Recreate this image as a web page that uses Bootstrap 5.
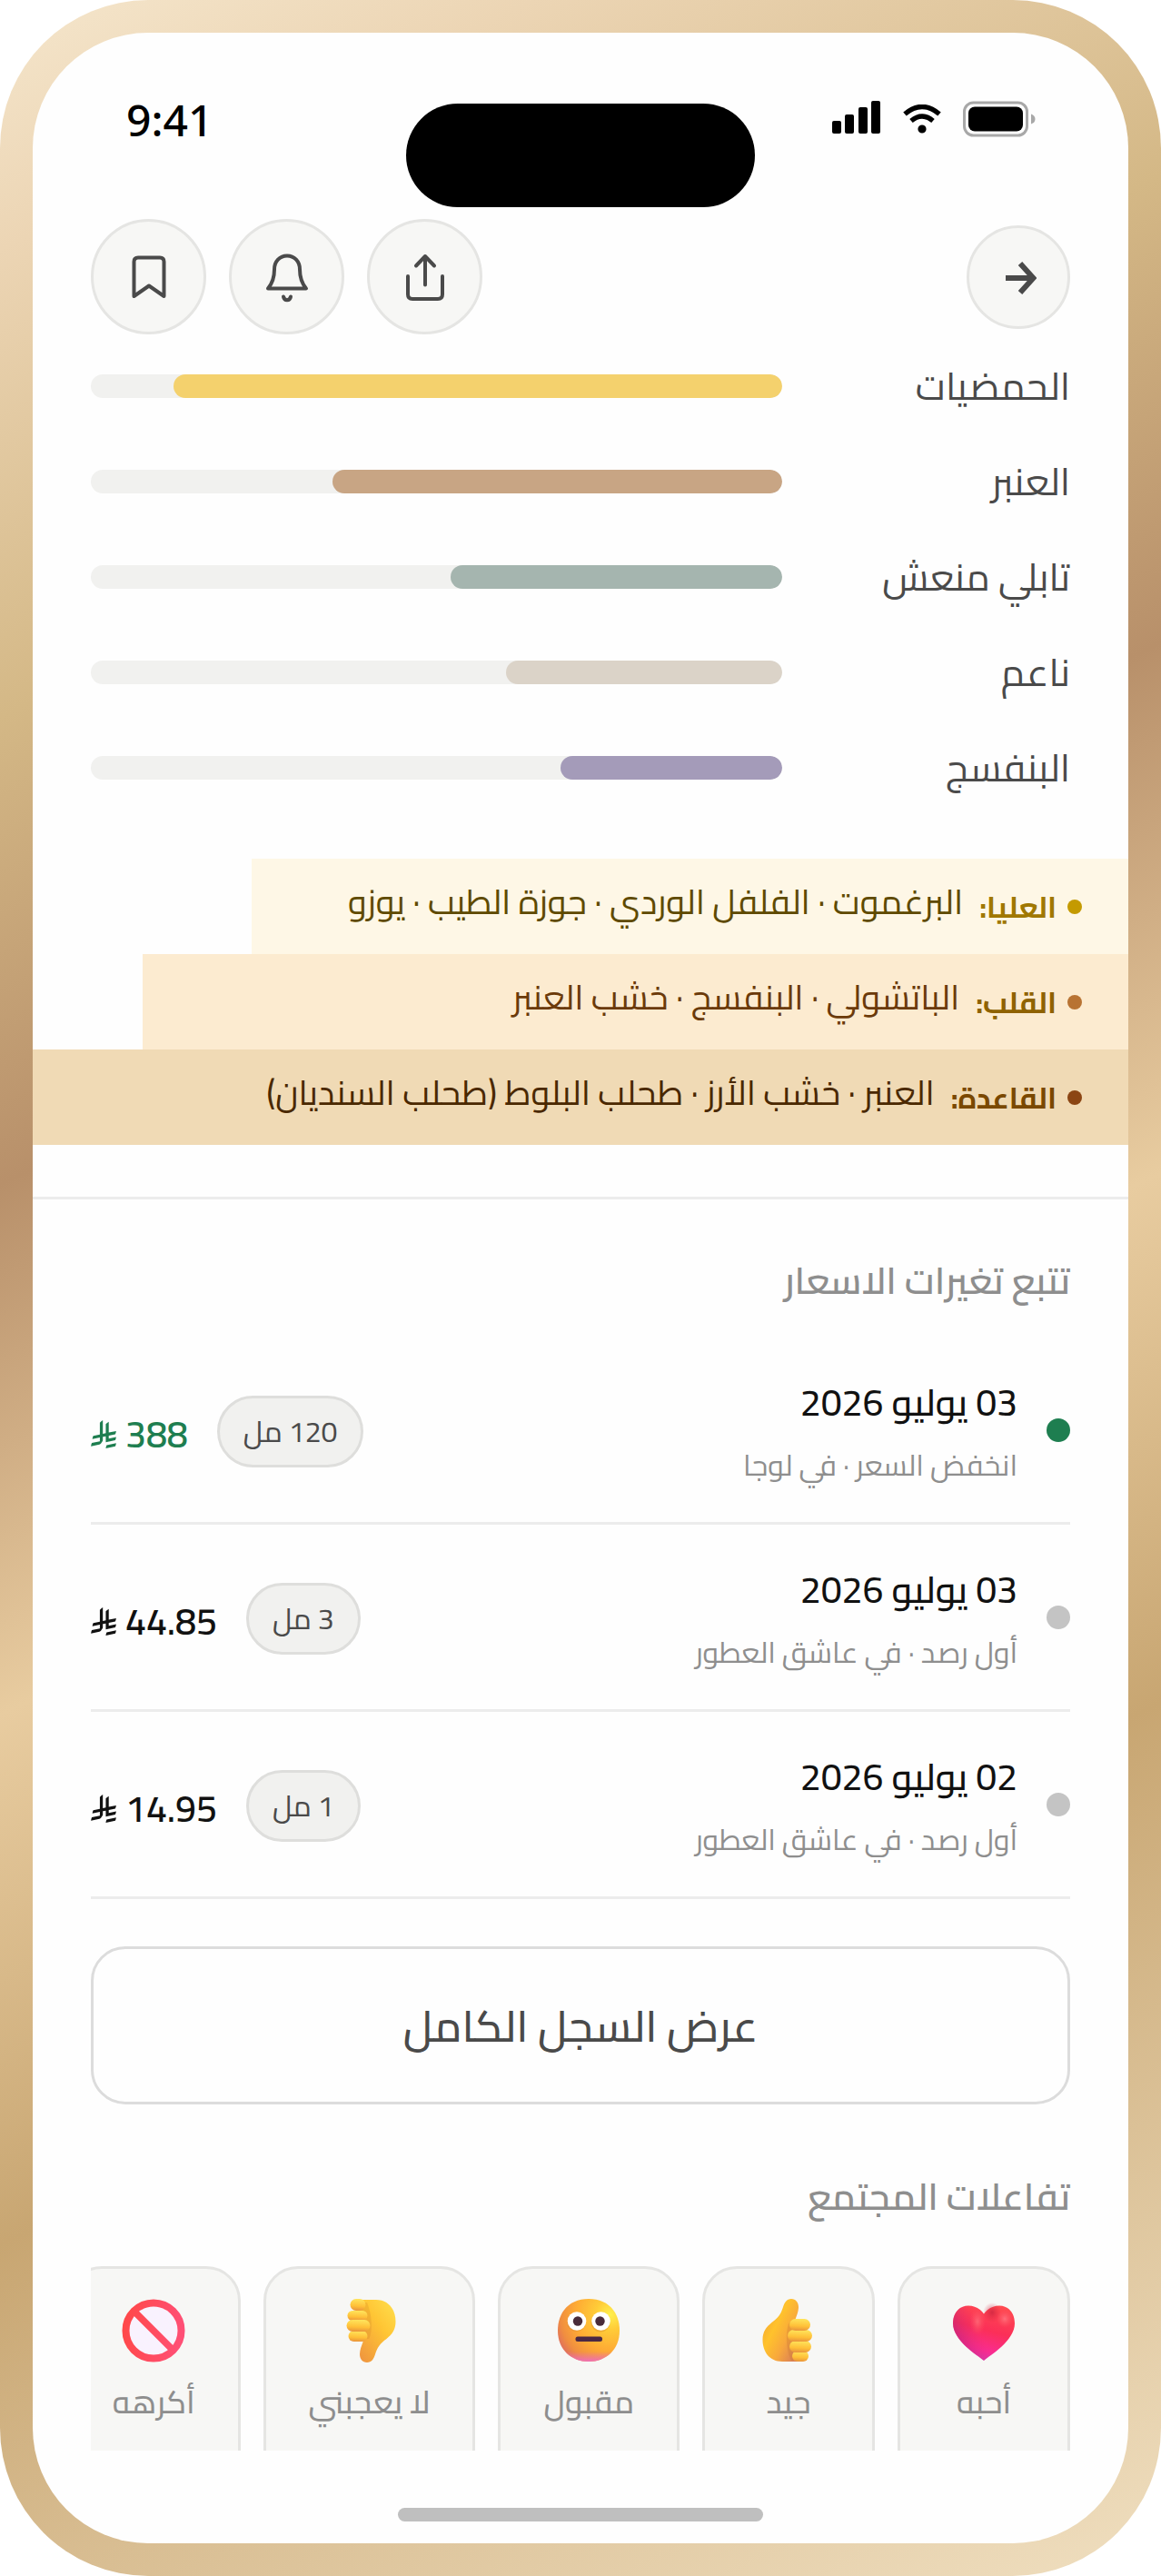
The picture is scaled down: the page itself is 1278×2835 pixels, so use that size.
<!DOCTYPE html>
<html lang="ar" dir="rtl">
<head>
<meta charset="utf-8">
<meta name="viewport" content="width=device-width, initial-scale=1">
<title>تفاصيل العطر</title>
<link href="https://cdn.jsdelivr.net/npm/bootstrap@5.3.0/dist/css/bootstrap.min.css" rel="stylesheet">
<style>
  body { background: #fff; font-family: Cairo, "Noto Sans Arabic", "DejaVu Sans", sans-serif; }
  .phone {
    padding: 36px;
    border-radius: 163px;
    background: linear-gradient(155deg, #f5e6cc 0%, #ecd5b4 8%, #d4b886 23%, #b8906a 38%, #e8cca0 55%, #c8a672 72%, #f0dfc0 100%);
  }
  .screen { background: #fefefe; border-radius: 127px; padding-bottom: 24px; color: #4a4a4a; }
  .gutter { padding-right: 64px; padding-left: 64px; }

  /* status bar */
  .status-bar { height: 205px; padding: 68px 102px 0 103px; }
  .clock { font: 500 48px/56px "Noto Sans", sans-serif; color: #000; }
  .island { top: 78px; width: 384px; height: 114px; background: #000; }
  .signals { gap: 24px; height: 54px; }

  /* header buttons */
  .tool-group { gap: 25px; }
  .tool { width: 127px; height: 127px; background: #f7f7f5; border: 3px solid #e5e5e3; color: #4a4a4a; }
  .tool-back { width: 114px; height: 114px; }
  .tool svg { fill: none; stroke: currentColor; stroke-width: 4; stroke-linecap: round; stroke-linejoin: round; }
  .tool-back svg { stroke-width: 6; stroke-linecap: butt; stroke-linejoin: miter; }

  /* accords */
  .accords { padding-top: 22px; gap: 36px; }
  .accord-name { flex: 0 0 317px; font-size: 42px; line-height: 69px; }
  .meter { height: 26px; border-radius: 13px; background: #f1f1ef; }
  .meter .progress-bar { border-radius: 13px; }

  /* notes pyramid */
  .pyramid { margin-top: 66px; }
  .tier { height: 105px; padding-right: 51px; }
  .tier-dot { width: 16px; height: 16px; margin-left: 12px; }
  .tier-name { font-size: 32px; font-weight: 700; margin-left: 18px; }
  .tier-list { font-size: 38px; line-height: 60px; padding-bottom: 12px; }
  .tier-top { width: 80%; background: #fef7e6; color: #5f4a00; }
  .tier-top .tier-name { color: #a07800; }
  .tier-top .tier-dot { background: #c49a00; }
  .tier-heart { width: 90%; background: #fcebd0; color: #6b3a0a; }
  .tier-heart .tier-name { color: #8f6200; }
  .tier-heart .tier-dot { background: #b87333; }
  .tier-base { background: #f0dab5; color: #4a2800; }
  .tier-base .tier-name { color: #7a4800; }
  .tier-base .tier-dot { background: #8b4513; }

  /* price history */
  .history { margin-top: 57px; padding-top: 51px; border-top: 3px solid #ececec; }
  .section-title { font-size: 41px; font-weight: 600; line-height: 77px; color: #8e8e8e; }
  .price-list { margin-top: 24px; }
  .price-row { height: 206px; gap: 32px; border-bottom: 3px solid #ececec; }
  .price-dot { width: 26px; height: 26px; background: #c4c4c4; }
  .price-dot.down { background: #1e7e50; }
  .price-date { font-size: 41px; font-weight: 500; line-height: 77px; color: #111; }
  .price-shop { font-size: 32px; line-height: 60px; color: #8e8e8e; }
  .price-end { gap: 32px; padding-top: 3px; }
  .size-pill { font-size: 32px; line-height: 59px; padding: 7px 26px; background: #f1f1ef; border: 3px solid #dededc; color: #4a4a4a; }
  .price { font-size: 41px; font-weight: 600; line-height: 77px; gap: 10px; color: #111; padding-top: 6px; }
  .price.down { color: #1e7e50; }
  .show-all { margin-top: 52px; height: 174px; border: 3px solid #dcdcdc; border-radius: 38px; font-size: 48px; font-weight: 500; color: #4a4a4a; }

  /* community reactions */
  .community { margin-top: 63px; }
  .reactions { margin-top: 38px; height: 203px; gap: 25px; }
  .reaction { flex: 0 0 auto; min-width: 190px; height: 240px; padding: 33px 47px; gap: 10px; border: 3px solid #e5e5e3; border-radius: 38px; background: #f7f7f5; font-size: 35px; font-weight: 500; line-height: 66px; color: #8e8e8e; }
  .home-bar { width: calc(100% / 3); height: 15px; margin-top: 63px; background: #bfbfbf; }
</style>
</head>
<body>
<svg width="0" height="0" class="position-absolute" aria-hidden="true">
  <defs>
    <symbol id="riyal" viewBox="0 0 1124 1257">
      <path fill="currentColor" d="M699.62,1113.02c-20.06,44.48-33.32,92.75-38.4,143.37l424.51-90.24c20.06-44.47,33.31-92.75,38.4-143.37l-424.51,90.24Z"/>
      <path fill="currentColor" d="M1085.73,895.8c20.06-44.47,33.32-92.75,38.4-143.37l-330.68,70.33v-135.2l292.27-62.11c20.06-44.47,33.32-92.75,38.4-143.37l-330.68,70.27V66.13c-50.67,28.45-95.67,66.32-132.25,110.99v403.35l-132.25,28.11V0c-50.67,28.44-95.67,66.32-132.25,110.99v525.69l-295.91,62.88c-20.06,44.47-33.33,92.75-38.42,143.37l334.33-71.05v170.26l-358.3,76.14c-20.06,44.47-33.32,92.75-38.4,143.37l375.04-79.7c30.53-6.35,56.77-24.4,73.83-49.24l68.78-101.97v-.02c7.14-10.55,11.3-23.27,11.3-36.97v-149.98l132.25-28.11v270.4l424.53-90.28Z"/>
    </symbol>
    <linearGradient id="gHeart" x1=".7" y1="0" x2=".4" y2="1"><stop offset="0" stop-color="#ff4a50"/><stop offset=".45" stop-color="#fb2f58"/><stop offset=".8" stop-color="#f92c90"/><stop offset="1" stop-color="#d83ab0"/></linearGradient>
    <linearGradient id="gHeartL" x1="0" y1=".5" x2=".4" y2=".35"><stop offset="0" stop-color="#b0207c" stop-opacity=".6"/><stop offset="1" stop-color="#e02c70" stop-opacity="0"/></linearGradient>
    <radialGradient id="gGlow"><stop offset="0" stop-color="#ff6f7c"/><stop offset="1" stop-color="#ff5060" stop-opacity="0"/></radialGradient>
    <radialGradient id="gShade"><stop offset="0" stop-color="#c01c3c" stop-opacity=".9"/><stop offset="1" stop-color="#d8203c" stop-opacity="0"/></radialGradient>
    <radialGradient id="gFace" cx=".85" cy=".25" r=".95"><stop offset="0" stop-color="#fff04e"/><stop offset=".25" stop-color="#ffcc38"/><stop offset=".6" stop-color="#feab34"/><stop offset=".85" stop-color="#f08e40"/><stop offset="1" stop-color="#e0705c"/></radialGradient>
    <linearGradient id="gChin" x1="0" y1="0" x2="0" y2="1"><stop offset=".84" stop-color="#f070b0" stop-opacity="0"/><stop offset="1" stop-color="#f070b8"/></linearGradient>
    <linearGradient id="gPalmUp" x1="0" y1=".2" x2=".9" y2="1"><stop offset="0" stop-color="#f2a234"/><stop offset=".35" stop-color="#ffc22c"/><stop offset=".65" stop-color="#f8a83c"/><stop offset="1" stop-color="#d87c58"/></linearGradient>
    <linearGradient id="gPalmDown" x1="1" y1="0" x2=".2" y2="1"><stop offset="0" stop-color="#ffe04e"/><stop offset=".45" stop-color="#ffc534"/><stop offset="1" stop-color="#f0983e"/></linearGradient>
    <linearGradient id="gFinger" x1=".4" y1="0" x2=".3" y2="1"><stop offset="0" stop-color="#ffe45c"/><stop offset=".6" stop-color="#ffc038"/><stop offset="1" stop-color="#e8923c"/></linearGradient>
    <linearGradient id="gBan" gradientUnits="userSpaceOnUse" x1="0" y1="30" x2="70" y2="40"><stop offset="0" stop-color="#ff4848"/><stop offset="1" stop-color="#ff5078"/></linearGradient>
  </defs>
</svg>

<div class="phone">
  <main class="screen overflow-hidden d-flex flex-column">

    <div class="status-bar position-relative d-flex justify-content-between align-items-start" dir="ltr">
      <span class="clock">9:41</span>
      <div class="island position-absolute start-50 translate-middle-x rounded-pill"></div>
      <div class="signals d-flex align-items-center" aria-hidden="true">
        <svg width="54" height="40" viewBox="0 0 54 40"><rect y="22" width="10" height="14" rx="2"/><rect x="14" y="15" width="10" height="21" rx="2"/><rect x="29" y="7" width="10" height="29" rx="2"/><rect x="43" width="10" height="36" rx="2"/></svg>
        <svg width="42" height="32" viewBox="0 0 42 32" fill="none" stroke="#000" stroke-width="5.4"><path d="M2 10.500Q21-5.500 40 10.500M9 18Q21 8 33 18"/><circle cx="21" cy="27" r="4.600" fill="#000" stroke="none"/></svg>
        <svg width="80" height="40" viewBox="0 0 80 40"><rect x="1.500" y="2" width="69" height="36" rx="10" fill="none" stroke="#a8a8a8" stroke-width="3"/><rect x="6" y="6.500" width="60" height="27" rx="7"/><path d="M75 14.500q4.500 1.500 4.500 5.500t-4.500 5.500z" fill="#a8a8a8"/></svg>
      </div>
    </div>

    <header class="gutter d-flex justify-content-between align-items-center">
      <button type="button" class="tool tool-back btn rounded-circle p-0 d-flex align-items-center justify-content-center" aria-label="رجوع">
        <svg width="40" height="40" viewBox="0 0 40 40"><path d="M6 21h31M22 5l14.500 16L22 37"/></svg>
      </button>
      <div class="tool-group d-flex" dir="ltr">
        <button type="button" class="tool btn rounded-circle p-0 d-flex align-items-center justify-content-center" aria-label="حفظ">
          <svg width="60" height="60" viewBox="0 0 60 60"><path d="M13.500 51V13q0-4.500 4.500-4.500h24q4.500 0 4.500 4.500v38L30 39.500z"/></svg>
        </button>
        <button type="button" class="tool btn rounded-circle p-0 d-flex align-items-center justify-content-center" aria-label="تنبيه">
          <svg width="60" height="60" viewBox="0 0 60 60"><path d="M9 42.500C14.500 36 16 29 16 21.500 16 12.500 22 6.500 30 6.500s14 6 14 15c0 7.500 1.500 14.500 7 21zM26 51.500c1 5 7 5 8 0"/></svg>
        </button>
        <button type="button" class="tool btn rounded-circle p-0 d-flex align-items-center justify-content-center" aria-label="مشاركة">
          <svg width="60" height="60" viewBox="0 0 60 60"><path d="M11 29v20q0 5 5 5h28q5 0 5-5V29M30 38.500V7M20 17.500L30 7l10 10.500"/></svg>
        </button>
      </div>
    </header>

    <section class="accords gutter d-flex flex-column">
      <div class="d-flex align-items-center"><span class="accord-name">الحمضيات</span><div class="meter progress flex-fill"><div class="progress-bar" style="width:88%;background:#f4d16d"></div></div></div>
      <div class="d-flex align-items-center"><span class="accord-name">العنبر</span><div class="meter progress flex-fill"><div class="progress-bar" style="width:65%;background:#c8a584"></div></div></div>
      <div class="d-flex align-items-center"><span class="accord-name">تابلي منعش</span><div class="meter progress flex-fill"><div class="progress-bar" style="width:48%;background:#a5b5af"></div></div></div>
      <div class="d-flex align-items-center"><span class="accord-name">ناعم</span><div class="meter progress flex-fill"><div class="progress-bar" style="width:40%;background:#dbd3c8"></div></div></div>
      <div class="d-flex align-items-center"><span class="accord-name">البنفسج</span><div class="meter progress flex-fill"><div class="progress-bar" style="width:32%;background:#a49bb9"></div></div></div>
    </section>

    <section class="pyramid text-nowrap">
      <div class="tier tier-top d-flex align-items-center"><span class="tier-dot rounded-circle"></span><span class="tier-name">العليا:</span><span class="tier-list">البرغموت · الفلفل الوردي · جوزة الطيب · يوزو</span></div>
      <div class="tier tier-heart d-flex align-items-center"><span class="tier-dot rounded-circle"></span><span class="tier-name">القلب:</span><span class="tier-list">الباتشولي · البنفسج · خشب العنبر</span></div>
      <div class="tier tier-base d-flex align-items-center"><span class="tier-dot rounded-circle"></span><span class="tier-name">القاعدة:</span><span class="tier-list">العنبر · خشب الأرز · طحلب البلوط (طحلب السنديان)</span></div>
    </section>

    <section class="history gutter d-flex flex-column">
      <h2 class="section-title m-0">تتبع تغيرات الاسعار</h2>
      <ul class="price-list list-unstyled mb-0 p-0">
        <li class="price-row d-flex align-items-center">
          <span class="price-dot down rounded-circle"></span>
          <div class="flex-fill"><div class="price-date">03 يوليو 2026</div><div class="price-shop">انخفض السعر · في لوجا</div></div>
          <div class="price-end d-flex align-items-center">
            <span class="size-pill rounded-pill">120 مل</span>
            <span class="price down d-flex align-items-center" dir="ltr"><svg width="28" height="31" role="img" aria-label="ريال"><use href="#riyal"/></svg>388</span>
          </div>
        </li>
        <li class="price-row d-flex align-items-center">
          <span class="price-dot rounded-circle"></span>
          <div class="flex-fill"><div class="price-date">03 يوليو 2026</div><div class="price-shop">أول رصد · في عاشق العطور</div></div>
          <div class="price-end d-flex align-items-center">
            <span class="size-pill rounded-pill">3 مل</span>
            <span class="price d-flex align-items-center" dir="ltr"><svg width="28" height="31" role="img" aria-label="ريال"><use href="#riyal"/></svg>44.85</span>
          </div>
        </li>
        <li class="price-row d-flex align-items-center">
          <span class="price-dot rounded-circle"></span>
          <div class="flex-fill"><div class="price-date">02 يوليو 2026</div><div class="price-shop">أول رصد · في عاشق العطور</div></div>
          <div class="price-end d-flex align-items-center">
            <span class="size-pill rounded-pill">1 مل</span>
            <span class="price d-flex align-items-center" dir="ltr"><svg width="28" height="31" role="img" aria-label="ريال"><use href="#riyal"/></svg>14.95</span>
          </div>
        </li>
      </ul>
      <button type="button" class="show-all btn w-100 p-0">عرض السجل الكامل</button>
    </section>

    <section class="community gutter">
      <h2 class="section-title m-0">تفاعلات المجتمع</h2>
      <div class="reactions d-flex overflow-hidden">
        <button type="button" class="reaction btn d-flex flex-column align-items-center">
          <svg width="70" height="70" viewBox="0 0 70 70"><path d="M35 68C28 62 1 46 1 27 1 15.500 8 7.500 18 7.500c7 0 13 3.500 17 9 4-5.500 10-9 17-9 10 0 17 8 17 19.500C69 46 42 62 35 68z" fill="url(#gHeart)"/><ellipse cx="44" cy="15" rx="10" ry="11" fill="url(#gShade)" opacity=".7"/><ellipse cx="58" cy="22" rx="9" ry="10" fill="url(#gGlow)"/><ellipse cx="28" cy="25" rx="9" ry="15" fill="url(#gGlow)" opacity=".8"/><path d="M35 68C28 62 1 46 1 27 1 15.500 8 7.500 18 7.500c7 0 13 3.500 17 9 4-5.500 10-9 17-9 10 0 17 8 17 19.500C69 46 42 62 35 68z" fill="url(#gHeartL)"/></svg>
          <span>أحبه</span>
        </button>
        <button type="button" class="reaction btn d-flex flex-column align-items-center">
          <svg width="70" height="70" viewBox="0 0 70 70"><path d="M38 0c5 0 8 4 8 9 0 5-2 9-3.500 13.500L46 69H28C14 69 6.500 58 6.500 45c0-9 4-14 10-19 7-5 10-9 12.500-17C30.500 4 33 0 38 0z" fill="url(#gPalmUp)"/><path d="M36 26c-4 6-5 28 2 42h6V26z" fill="#c87830" opacity=".3"/><rect x="39" y="57" width="18" height="12" rx="6" fill="url(#gFinger)"/><rect x="36" y="46" width="24" height="13" rx="6.500" fill="url(#gFinger)"/><rect x="34" y="34" width="27" height="13" rx="6.500" fill="url(#gFinger)"/><rect x="36" y="22" width="23" height="13" rx="6.500" fill="url(#gFinger)"/></svg>
          <span>جيد</span>
        </button>
        <button type="button" class="reaction btn d-flex flex-column align-items-center">
          <svg width="70" height="70" viewBox="0 0 70 70"><path d="M35 0C56 0 69 14 69 35 69 56 54 69 35 69S1 56 1 35C1 14 14 0 35 0z" fill="url(#gFace)"/><path d="M35 0C56 0 69 14 69 35 69 56 54 69 35 69S1 56 1 35C1 14 14 0 35 0z" fill="url(#gChin)"/><circle cx="21.500" cy="25.500" r="10.500" fill="#d88830" opacity=".35"/><circle cx="48" cy="26" r="10.500" fill="#d88830" opacity=".35"/><circle cx="22" cy="24.500" r="10.300" fill="#fff"/><circle cx="48.500" cy="24.500" r="10.300" fill="#fff"/><circle cx="23" cy="24.500" r="5.200" fill="#4a2c3a"/><circle cx="47.500" cy="24.500" r="5.200" fill="#4a2c3a"/><rect x="20.500" y="41.500" width="29.500" height="5.500" rx="2.500" fill="#4a2844"/></svg>
          <span>مقبول</span>
        </button>
        <button type="button" class="reaction btn d-flex flex-column align-items-center">
          <svg width="70" height="70" viewBox="0 0 70 70"><path d="M32 70c-5 0-8-4-8-9 0-5 2-9 3.500-13.500L22 1h20C56 1 63.500 12 63.500 25c0 9-4 14-10 19-7 5-10 9-12.500 17C39.500 66 37 70 32 70z" fill="url(#gPalmDown)"/><path d="M34 44c4-6 4-26-2-40h-6v40z" fill="#d08428" opacity=".25"/><rect x="11.500" y="35" width="21" height="12" rx="6" fill="url(#gFinger)"/><rect x="10.500" y="13" width="22" height="11" rx="5.500" fill="url(#gFinger)"/><rect x="9.500" y="23" width="26" height="13" rx="6.500" fill="url(#gFinger)"/><rect x="13.500" y="0" width="17" height="13" rx="6.500" fill="url(#gFinger)"/></svg>
          <span>لا يعجبني</span>
        </button>
        <button type="button" class="reaction btn d-flex flex-column align-items-center">
          <svg width="70" height="70" viewBox="0 0 70 70"><circle cx="35" cy="35" r="30.500" fill="#f9f2fe"/><path d="M15 15l40 40" stroke="url(#gBan)" stroke-width="7.500"/><circle cx="35" cy="35" r="30.500" fill="none" stroke="url(#gBan)" stroke-width="8"/></svg>
          <span>أكرهه</span>
        </button>
      </div>
    </section>

    <div class="home-bar rounded-pill align-self-center"></div>
  </main>
</div>
<script src="https://cdn.jsdelivr.net/npm/bootstrap@5.3.0/dist/js/bootstrap.bundle.min.js"></script>
</body>
</html>
